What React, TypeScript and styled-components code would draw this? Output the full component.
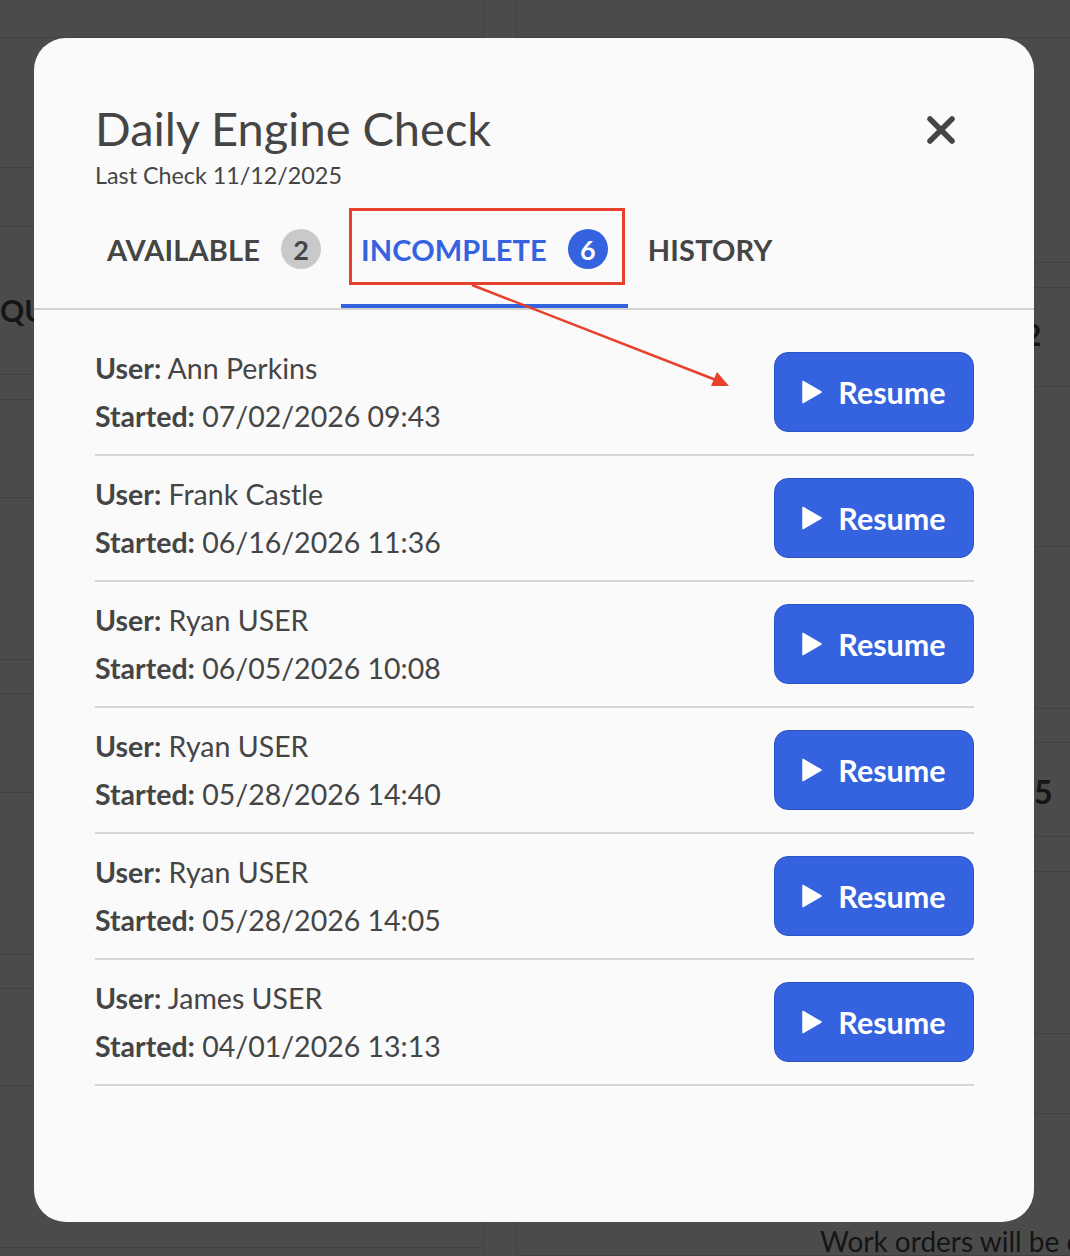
import styled, {createGlobalStyle} from "styled-components";

const GlobalStyle = createGlobalStyle`
    body {
        margin: 0;
        background: #4b4b4b;
        font-family: Lato, "Open Sans", sans-serif;
    }
`

const StyledRootDiv = styled.div`
    position: relative;
    width: 1070px;
    height: 1256px;
    overflow: hidden;
    background: #4b4b4b;
`

const StyledPageDiv = styled.div`
    display: flex;
    height: 100%;
`

const StyledPanelDiv = styled.div<{ $width: number }>`
    width: ${p => p.$width}px;
    flex-shrink: 0;
    display: flex;
    flex-direction: column;
`

const StyledPanelGap = styled.div`
    width: 32px;
    border-left: 1px solid #424242;
    border-right: 1px solid #424242;
`

const StyledBgRow = styled.div<{ $height: number, $indent: number, $top: number, $size: number }>`
    box-sizing: border-box;
    height: ${p => p.$height}px;
    flex-shrink: 0;
    border-bottom: 1px solid #414141;
    padding: ${p => p.$top}px 0 0 ${p => p.$indent}px;
    color: #151515;
    font-size: ${p => p.$size}px;
    line-height: 1.2;
    font-weight: bold;
    white-space: nowrap;

    &.plain {
        font-weight: normal;
    }
`

const StyledModalDiv = styled.div`
    position: absolute;
    left: 34px;
    top: 38px;
    width: 1000px;
    height: 1184px;
    background: #fafafa;
    border-radius: 32px;
    color: #454545;
`

const StyledHeaderDiv = styled.div`
    display: flex;
    justify-content: space-between;
    align-items: flex-start;
    padding: 62px 78px 0 61px;
`

const StyledTitleH1 = styled.h1`
    margin: 0;
    font-size: 47px;
    font-weight: normal;
    line-height: 1.2;
`

const StyledSubtitleP = styled.p`
    margin: 6px 0 0;
    font-size: 23.3px;
    line-height: 1.2;
`

const StyledCloseButton = styled.button`
    margin-top: 15px;
    padding: 0;
    border: none;
    background: none;
    width: 30px;
    height: 30px;
    cursor: pointer;
`

const StyledTabsDiv = styled.div`
    display: flex;
    margin-top: 19px;
    padding-left: 53px;
    border-bottom: 2px solid #d3d3d3;
`

const StyledTab = styled.div`
    display: flex;
    align-items: center;
    height: 40px;
    padding: 20px 20px 35px;
    border-bottom: 4px solid transparent;
    font-size: 29px;
    font-weight: bold;
    letter-spacing: 0.15px;
    color: #454545;

    &.selected {
        color: #3563e0;
        border-bottom-color: #3563e0;
    }
`

const StyledBadgeSpan = styled.span`
    display: flex;
    align-items: center;
    justify-content: center;
    width: 40px;
    height: 40px;
    margin-left: 21px;
    border-radius: 50%;
    background: #c9c9c9;
    color: #454545;
    font-size: 27px;
    letter-spacing: 0;

    &.selected {
        background: #3563e0;
        color: #fff;
    }
`

const StyledListDiv = styled.div`
    padding: 20px 60px 0 61px;
`

const StyledRowDiv = styled.div`
    display: flex;
    align-items: center;
    justify-content: space-between;
    padding: 14px 0;
    border-bottom: 2px solid #d6d6d6;
`

const StyledInfoDiv = styled.div`
    font-size: 28.5px;
    line-height: 48px;

    & b {
        font-weight: bold;
    }
`

const StyledResumeButton = styled.button`
    display: flex;
    align-items: center;
    justify-content: center;
    gap: 16px;
    width: 200px;
    height: 80px;
    border: 1.5px solid #2b54c9;
    border-radius: 14px;
    background: #3563e0;
    color: #fff;
    font-family: Lato, sans-serif;
    font-size: 30.5px;
    font-weight: bold;
    cursor: pointer;
`

const StyledAnnotationSvg = styled.svg`
    position: absolute;
    left: 0;
    top: 0;
    pointer-events: none;
`

type BgRow = { h: number, text?: string, indent?: number, top?: number, size?: number, plain?: boolean }

const leftRows: BgRow[] = [
    {h: 38}, {h: 130}, {h: 59}, {h: 148, text: "QU", indent: 0, top: 65, size: 30}, {h: 25}, {h: 98},
    {h: 162}, {h: 34}, {h: 99}, {h: 162}, {h: 34}, {h: 97}, {h: 162},
]

const rightRows: BgRow[] = [
    {h: 38}, {h: 225}, {h: 25}, {h: 99, text: "2", indent: 507, top: 28, size: 30}, {h: 160}, {h: 162},
    {h: 34}, {h: 94, text: "5", indent: 517, top: 30, size: 32}, {h: 35}, {h: 162}, {h: 80},
    {h: 142, text: "Work orders will be completed", indent: 303, top: 111, size: 28, plain: true},
]

const sessions = [
    {user: "Ann Perkins", started: "07/02/2026 09:43"},
    {user: "Frank Castle", started: "06/16/2026 11:36"},
    {user: "Ryan USER", started: "06/05/2026 10:08"},
    {user: "Ryan USER", started: "05/28/2026 14:40"},
    {user: "Ryan USER", started: "05/28/2026 14:05"},
    {user: "James USER", started: "04/01/2026 13:13"},
]

const PlayIcon = () => <svg width="20" height="24" viewBox="0 0 20 24">
    <path d="M1 1.5 L19 12 L1 22.5 Z" fill="#fff" stroke="#fff" strokeWidth="1.5" strokeLinejoin="round"/>
</svg>

const renderBgRows = (rows: BgRow[]) => rows.map((row, i) => <StyledBgRow
    key={i}
    $height={row.h}
    $indent={row.indent ?? 0}
    $top={row.top ?? 0}
    $size={row.size ?? 26}
    className={row.plain ? 'plain' : ''}
>
    {row.text}
</StyledBgRow>)

export default function App() {
    return <StyledRootDiv>
        <GlobalStyle/>
        <StyledPageDiv>
            <StyledPanelDiv $width={483}>
                {renderBgRows(leftRows)}
            </StyledPanelDiv>
            <StyledPanelGap/>
            <StyledPanelDiv $width={553}>
                {renderBgRows(rightRows)}
            </StyledPanelDiv>
        </StyledPageDiv>

        <StyledModalDiv>
            <StyledHeaderDiv>
                <div>
                    <StyledTitleH1>Daily Engine Check</StyledTitleH1>
                    <StyledSubtitleP>Last Check 11/12/2025</StyledSubtitleP>
                </div>
                <StyledCloseButton aria-label="Close">
                    <svg width="30" height="30" viewBox="0 0 30 30">
                        <path d="M4 4 L26 26 M26 4 L4 26" stroke="#454545" strokeWidth="5.5" strokeLinecap="round"/>
                    </svg>
                </StyledCloseButton>
            </StyledHeaderDiv>

            <StyledTabsDiv>
                <StyledTab>
                    AVAILABLE
                    <StyledBadgeSpan>2</StyledBadgeSpan>
                </StyledTab>
                <StyledTab className="selected">
                    INCOMPLETE
                    <StyledBadgeSpan className="selected">6</StyledBadgeSpan>
                </StyledTab>
                <StyledTab>HISTORY</StyledTab>
            </StyledTabsDiv>

            <StyledListDiv>
                {
                    sessions.map((session, i) => {
                        return <StyledRowDiv key={i}>
                            <StyledInfoDiv>
                                <div><b>User:</b> {session.user}</div>
                                <div><b>Started:</b> {session.started}</div>
                            </StyledInfoDiv>
                            <StyledResumeButton>
                                <PlayIcon/>
                                Resume
                            </StyledResumeButton>
                        </StyledRowDiv>
                    })
                }
            </StyledListDiv>
        </StyledModalDiv>

        {/* review annotation drawn over the screenshot */}
        <StyledAnnotationSvg width="1070" height="1256">
            <rect x="350.5" y="209.5" width="273" height="74" fill="none" stroke="#e8412b" strokeWidth="3"/>
            <line x1="472" y1="285" x2="716" y2="380" stroke="#e8412b" strokeWidth="2.5"/>
            <path d="M729 386 L711 386 L717 372 Z" fill="#e8412b"/>
        </StyledAnnotationSvg>
    </StyledRootDiv>
}
